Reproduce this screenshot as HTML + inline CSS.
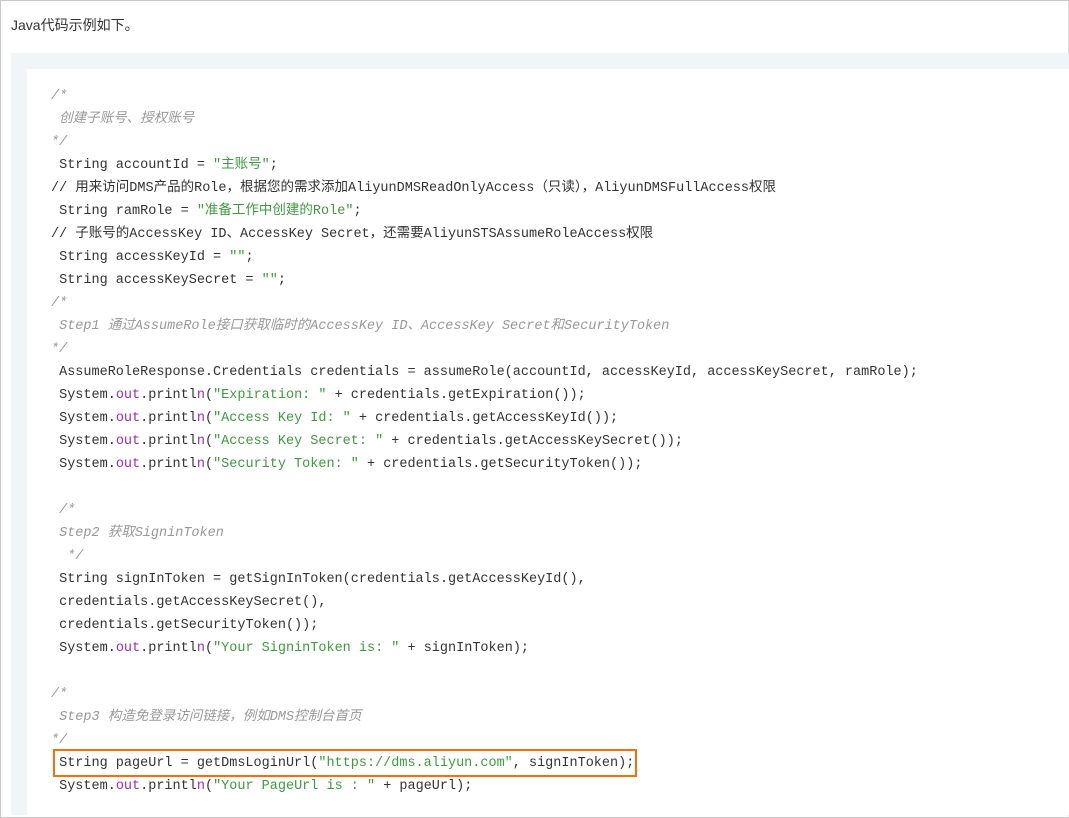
<!DOCTYPE html>
<html><head><meta charset="utf-8"><style>
body{margin:0;width:1069px;height:818px;overflow:hidden;background:#fff;font-family:"Liberation Sans","Noto Sans CJK SC",sans-serif}
.frame{position:absolute;left:0;top:0;width:1067px;height:816px;border:1px solid #c8c8c8;border-right-color:#ddd}
.t{position:absolute;left:11px;top:15px;font-size:14px;color:#333}
.g{position:absolute;left:11px;top:53px;width:1058px;height:762px;background:#f2f5f8}
.w{position:absolute;left:27px;top:69px;width:1042px;height:746px;background:#fff}
pre{position:absolute;left:51px;top:85px;margin:0;font-family:"Liberation Mono","Noto Sans CJK SC",monospace;font-size:13.5px;line-height:23px;color:#333}
.c{color:#999;font-style:italic}
.s{color:#3f9a3f}
.p{color:#9b2fae}
.box{position:absolute;left:53px;top:749px;width:580px;height:24px;border:2px solid #f5700a}
</style></head><body>
<div class="frame"></div>
<div class="t">Java代码示例如下。</div>
<div class="g"></div><div class="w"></div>
<pre><span class="c">/*
 创建子账号、授权账号
*/</span>
 String accountId = <span class="s">"主账号"</span>;
// 用来访问DMS产品的Role，根据您的需求添加AliyunDMSReadOnlyAccess（只读），AliyunDMSFullAccess权限
 String ramRole = <span class="s">"准备工作中创建的Role"</span>;
// 子账号的AccessKey ID、AccessKey Secret，还需要AliyunSTSAssumeRoleAccess权限
 String accessKeyId = <span class="s">""</span>;
 String accessKeySecret = <span class="s">""</span>;
<span class="c">/*
 Step1 通过AssumeRole接口获取临时的AccessKey ID、AccessKey Secret和SecurityToken
*/</span>
 AssumeRoleResponse.Credentials credentials = assumeRole(accountId, accessKeyId, accessKeySecret, ramRole);
 System.<span class="p">out</span>.printl<span class="p">n</span>(<span class="s">"Expiration: "</span> + credentials.getExpiration());
 System.<span class="p">out</span>.printl<span class="p">n</span>(<span class="s">"Access Key Id: "</span> + credentials.getAccessKeyId());
 System.<span class="p">out</span>.printl<span class="p">n</span>(<span class="s">"Access Key Secret: "</span> + credentials.getAccessKeySecret());
 System.<span class="p">out</span>.printl<span class="p">n</span>(<span class="s">"Security Token: "</span> + credentials.getSecurityToken());

<span class="c"> /*
 Step2 获取SigninToken
  */</span>
 String signInToken = getSignInToken(credentials.getAccessKeyId(),
 credentials.getAccessKeySecret(),
 credentials.getSecurityToken());
 System.<span class="p">out</span>.printl<span class="p">n</span>(<span class="s">"Your SigninToken is: "</span> + signInToken);

<span class="c">/*
 Step3 构造免登录访问链接，例如DMS控制台首页
*/</span>
 String pageUrl = getDmsLoginUrl(<span class="s">"https://dms.aliyun.com"</span>, signInToken);
 System.<span class="p">out</span>.printl<span class="p">n</span>(<span class="s">"Your PageUrl is : "</span> + pageUrl);
</pre>
<div class="box"></div>
</body></html>
